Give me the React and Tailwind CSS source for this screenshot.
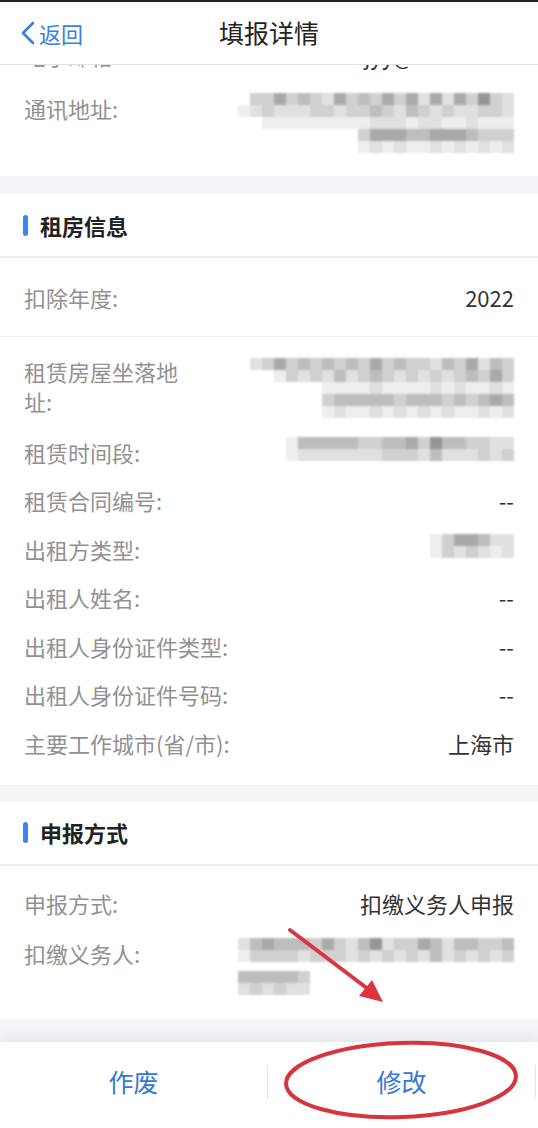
import React from 'react';

const FONT = { fontFamily: '"Noto Sans CJK SC", "Noto Sans", "Liberation Sans", sans-serif' };

// mosaic shades, '0' = empty
const SHADES = {
  '0': 'bg-transparent',
  '1': 'bg-[#eeeeee]',
  '2': 'bg-[#e0e0e0]',
  '3': 'bg-[#d0d0d0]',
  '4': 'bg-[#bdbdbd]',
  '5': 'bg-[#a9a9a9]',
  '6': 'bg-[#959595]',
};

function Mosaic({ rows }) {
  return (
    <div className="flex flex-col items-end blur-[1px]">
      {rows.map((r, i) => (
        <div key={i} className="flex">
          {r.split('').map((c, j) => (
            <div key={j} className={`w-3 h-3 ${SHADES[c]}`} />
          ))}
        </div>
      ))}
    </div>
  );
}

function Row({ label, children, className = '' }) {
  return (
    <div className={`flex justify-between items-start ${className}`}>
      <div className="text-[22px] leading-[30px] text-[#919191] shrink-0">{label}</div>
      <div className="text-[22px] leading-[30px] text-[#333] text-right">{children}</div>
    </div>
  );
}

function SectionTitle({ title }) {
  return (
    <div className="h-[64px] flex items-center px-[23px] border-b-2 border-[#ececec]">
      <div className="w-[5px] h-[21px] rounded-full bg-[#3d86f0] mr-[12px]" />
      <div className="text-[22px] font-bold text-[#222]">{title}</div>
    </div>
  );
}

export default function App() {
  return (
    <div className="w-[538px] h-[1128px] relative overflow-hidden bg-[#f4f5f8] flex flex-col" style={FONT}>
      <div className="h-[2px] bg-[#222] shrink-0" />

      {/* header */}
      <div className="h-[63px] shrink-0 bg-white border-b border-[#e2e2e2] grid grid-cols-3 items-center">
        <div className="flex items-center pl-[20px] text-[#3a7fdc]">
          <svg width="16" height="26" viewBox="0 0 16 26" fill="none">
            <path d="M13 3 L3 13 L13 23" stroke="currentColor" strokeWidth="2.6" strokeLinecap="round" strokeLinejoin="round" />
          </svg>
          <span className="text-[22px] ml-[3px]">返回</span>
        </div>
        <div className="text-center text-[25px] text-[#222]">填报详情</div>
        <div />
      </div>

      <div className="flex-1 overflow-hidden">
        {/* contact card, scrolled under the header */}
        <div className="bg-white px-[24px] pb-[23px]">
          <div className="h-[7px] overflow-hidden">
            <div className="flex justify-between -mt-[25px] text-[22px] leading-[30px]">
              <span className="text-[#919191]">电子邮箱:</span>
              <span className="text-[#333] mr-[100px]">zzjyy@</span>
            </div>
          </div>
          <Row label="通讯地址:" className="mt-[21px]">
            <Mosaic
              rows={[
                '3353432534353525253632',
                '12322233233432432322332',
                '111111111222122112111',
                '3555445554333',
                '1212112121212',
              ]}
            />
          </Row>
        </div>

        <div className="h-[18px]" />

        {/* rental info */}
        <div className="bg-white">
          <SectionTitle title="租房信息" />
          <div className="h-[79px] px-[24px] flex items-center justify-between border-b border-[#f0f0f0]">
            <span className="text-[22px] text-[#919191]">扣除年度:</span>
            <span className="text-[22px] text-[#333]">2022</span>
          </div>
          <div className="px-[24px] pt-[19px] pb-[27px] flex flex-col gap-[18.5px]">
            <Row label={<>租赁房屋坐落地<br />址:</>}>
              <div className="pt-[2px]">
                <Mosaic
                  rows={[
                    '2353434343534332435243',
                    '13232423432323234353',
                    '1111211112121121',
                    '3444443444343454',
                    '1211212121211212',
                  ]}
                />
              </div>
            </Row>
            <Row label="租赁时间段:">
              <Mosaic rows={['1444443344536443322', '1222222233324222323']} />
            </Row>
            <Row label="租赁合同编号:">--</Row>
            <Row label="出租方类型:">
              <Mosaic rows={['1355422', '1323212']} />
            </Row>
            <Row label="出租人姓名:">--</Row>
            <Row label="出租人身份证件类型:">--</Row>
            <Row label="出租人身份证件号码:">--</Row>
            <Row label="主要工作城市(省/市):">上海市</Row>
          </div>
        </div>

        <div className="h-[17px]" />

        {/* declaration */}
        <div className="bg-white">
          <SectionTitle title="申报方式" />
          <div className="px-[24px] pt-[22px] pb-[24px] flex flex-col gap-[20px]">
            <Row label="申报方式:">扣缴义务人申报</Row>
            <Row label="扣缴义务人:">
              <div className="flex flex-col items-start">
                <Mosaic
                  rows={[
                    '24544435324623354244334',
                    '13333233323232324232323',
                  ]}
                />
                <div className="mt-[9px]">
                  <Mosaic rows={['444443', '232322']} />
                </div>
              </div>
            </Row>
          </div>
        </div>
      </div>

      {/* footer */}
      <div className="h-[86px] shrink-0 bg-white shadow-[0_-4px_14px_rgba(0,0,0,0.07)] flex items-center pb-[6px]">
        <div className="flex-1 text-center text-[25px] text-[#3577d6]">作废</div>
        <div className="w-px h-[34px] bg-[#e3e3e3]" />
        <div className="flex-1 text-center text-[25px] text-[#3577d6]">修改</div>
        <div className="w-px h-[34px] bg-[#e3e3e3] mr-[2px]" />
      </div>

      {/* annotation overlay */}
      <svg className="absolute inset-0 pointer-events-none" width="538" height="1128" viewBox="0 0 538 1128">
        <line x1="290" y1="930" x2="368" y2="989" stroke="#dc3540" strokeWidth="4" strokeLinecap="round" />
        <polygon points="383,1002 359,996 372,980" fill="#dc3540" />
        <ellipse cx="401" cy="1080" rx="115" ry="37" fill="none" stroke="#d8343d" strokeWidth="4" transform="rotate(-2 401 1080)" />
      </svg>
    </div>
  );
}
